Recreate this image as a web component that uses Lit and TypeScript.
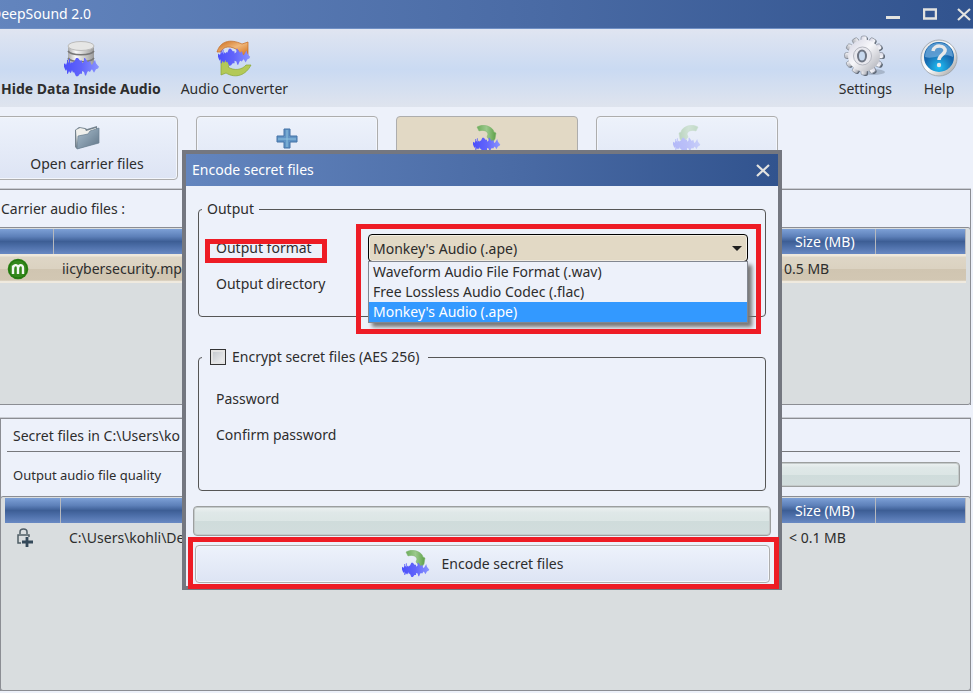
import { LitElement, html, css, svg } from "lit";
import { customElement } from "lit/decorators.js";

const wave = svg`<path d="M0 11V8L1 7L2 9L3 6V3H4V7L5 5V2H6V8L7 5L8 7L9 5L10 6L12 1H14L16 4H18V7L20 5V1H21L24 6L26 4L27 8L28 9L30 5L31 3L32 7L34 10L35 11L34 13L32 14L30 18L28 14L27 15L26 17L24 16L23 18L22 21H21L20 17L18 16V19H16L14 22H12L10 17L9 18L8 15L7 18H6L5 16L4 19H3V14L2 16L1 14Z"/>`;

const waveGradient = (id: string) => svg`<linearGradient id=${id}><stop stop-color="#4b50fb"/><stop offset=".5" stop-color="#6265fb"/><stop offset="1" stop-color="#8994ff"/></linearGradient>`;

const databaseIcon = html`<svg width="38" height="38" viewBox="0 0 38 38" aria-hidden="true">
  <defs>${waveGradient("w")}<linearGradient id="m"><stop stop-color="#aaa"/><stop offset=".3" stop-color="#fafafa"/><stop offset="1" stop-color="#9a9a9a"/></linearGradient></defs>
  <path d="M6 7V25C8 31 30 31 32 25V7Z" fill="url(#m)"/>
  <ellipse cx="19" cy="7" rx="13" ry="4.500" fill="#e6e6e5" stroke="#bbb"/>
  <path d="M6 12C9 17 29 17 32 12M6 19C9 24 29 24 32 19" fill="none" stroke="#777" stroke-width="1.500"/>
  <g transform="translate(2 18) scale(1 .88)" fill="url(#w)">${wave}</g></svg>`;

const converterIcon = html`<svg width="38" height="38" viewBox="0 0 38 38" aria-hidden="true">
  <defs>${waveGradient("w")}<linearGradient id="o" y2="1"><stop stop-color="#c96818"/><stop offset=".5" stop-color="#f0b77a"/><stop offset="1" stop-color="#d06c17"/></linearGradient></defs>
  <path d="M2 13C5 3 14-1 27 5L33 3V17H20L24 12C16 6 8 7 6 13Z" fill="url(#o)" stroke="#c46a20" stroke-width=".7"/>
  <path d="M36 26C31 36 21 40 11 34L6 36V21L17 23L13 28C19 32 27 31 31 26Z" fill="#b3c957" stroke="#8aa634" stroke-width=".7"/>
  <g transform="translate(3 9) scale(.92 .8)" fill="url(#w)">${wave}</g></svg>`;

const gearIcon = html`<svg width="42" height="42" viewBox="0 0 42 42" aria-hidden="true">
  <defs><linearGradient id="g" x2="1" y2="1"><stop stop-color="#d3d3e2"/><stop offset=".45" stop-color="#f7f7fa"/><stop offset="1" stop-color="#a9abb3"/></linearGradient></defs>
  <ellipse cx="29" cy="37" rx="12" ry="3" fill="#8f9caf" opacity=".6"/>
  <g fill="#5c6674" transform="translate(1 1)">${[0, 30, 60, 90, 120, 150].map(a => svg`<rect x="18" y="1" width="5" height="39" rx="2" transform=${`rotate(${a} 20.5 20.5)`}/>`)}</g>
  <g fill="url(#g)" stroke="#7b828d" stroke-width=".6">${[0, 30, 60, 90, 120, 150].map(a => svg`<rect x="17" y="1" width="6" height="39" rx="2" transform=${`rotate(${a} 20 20.5)`}/>`)}</g>
  <circle cx="20" cy="20.500" r="16" fill="url(#g)"/>
  <circle cx="18.500" cy="21" r="9" fill="#e8e8ee" stroke="#b5b7c0"/>
  <ellipse cx="18" cy="21" rx="4" ry="5.500" fill="#c8d9ee" stroke="#6e7583" stroke-width="2"/></svg>`;

const helpIcon = html`<svg width="38" height="38" viewBox="0 0 38 38" aria-hidden="true">
  <defs><linearGradient id="r" y2="1"><stop stop-color="#ddd"/><stop offset=".5" stop-color="#fff"/><stop offset="1" stop-color="#999"/></linearGradient>
  <radialGradient id="b" cy=".85"><stop stop-color="#1fc0f5"/><stop offset="1" stop-color="#1767ad"/></radialGradient></defs>
  <circle cx="19" cy="19" r="18" fill="url(#r)" stroke="#9a9fa6" stroke-width=".8"/>
  <circle cx="19" cy="18" r="15" fill="url(#b)"/>
  <path d="M5 18C5-1 33-1 33 18C24 13 14 21 5 18Z" fill="#7eb5e3" opacity=".65"/>
  <path d="M13 12C14 5 26 6 25 12C24 16 19 16 19 21" fill="none" stroke="#e9e9e9" stroke-width="3.500"/>
  <circle cx="19" cy="26" r="2.200" fill="#e9e9e9"/></svg>`;

const folderIcon = html`<svg width="26" height="26" viewBox="0 0 26 26" aria-hidden="true">
  <defs><linearGradient id="f" y2="1"><stop stop-color="#a9bccb"/><stop offset=".5" stop-color="#869bac"/><stop offset="1" stop-color="#607587"/></linearGradient></defs>
  <path d="M1 5L5 2L11 3L13 4L23 1L24 18L3 24L1 22Z" fill="#75838e"/>
  <path d="M2 5L6 3L11 4L12 6L22 3V8L5 11L3 22Z" fill="#f0f0ec"/>
  <path d="M4 11L14 9L16 6L25 3V18L3 24Z" fill="url(#f)" stroke="#6d8294" stroke-width=".7"/></svg>`;

const plusIcon = html`<svg width="22" height="26" viewBox="0 -3 22 26" aria-hidden="true">
  <path d="M8 1H14V8H21V14H14V20H8V14H1V8H8Z" fill="#6194c5" stroke="#4472a6"/>
  <path d="M11 2V19M2 11H20" stroke="#8fc3df" stroke-width="1"/></svg>`;

const encodeIcon = (flip = false) => html`<svg width="28" height="28" viewBox="0 0 28 28" aria-hidden="true">
  <defs>${waveGradient("w")}<linearGradient id="n"><stop stop-color="#6dad5b"/><stop offset=".5" stop-color="#9bc98d"/><stop offset="1" stop-color="#5ca046"/></linearGradient></defs>
  <g transform=${flip ? "translate(29 0) scale(-1 1)" : "translate(0 0)"}><path d="M4 2C11-2 20 2 21 7L23 8L22 14L19 18L14 12L15 9C14 5 9 5 6 6Z" fill="url(#n)" stroke="#7fb570" stroke-width=".5"/></g>
  <g transform="translate(0 12) scale(.78 .68)" fill="url(#w)">${wave}</g></svg>`;

const monoIcon = html`<svg width="22" height="22" viewBox="0 0 22 22" aria-hidden="true">
  <circle cx="11" cy="11" r="10.300" fill="#2f8317"/><circle cx="11" cy="11" r="9" fill="#34881b" stroke="#176b08" stroke-width=".6"/>
  <path d="M6 16V7.500M6 11C6 6 11 6 11 10V16M11 11C11 6 16 6 16 10V16" fill="none" stroke="#f4f8f2" stroke-width="2.400"/></svg>`;

const lockIcon = html`<svg width="18" height="20" viewBox="0 0 18 20" aria-hidden="true" fill="none" stroke="#4f5d66" stroke-width="1.500">
  <path d="M4 6V4C4 0 11 0 11 4V6M5 15H2V7H13V9"/><path d="M11 9V19M6 14H17" stroke="#34495a" stroke-width="2.800"/></svg>`;

const closeIcon = html`<svg width="14" height="13" viewBox="0 0 14 13" aria-hidden="true"><path d="M1 1L13 12M13 1L1 12" stroke="#e3e3e0" stroke-width="2.200" fill="none"/></svg>`;
const minimizeIcon = html`<svg width="14" height="13" viewBox="0 0 14 13" aria-hidden="true"><path d="M0 9.500H14" stroke="#e3e3e0" stroke-width="3"/></svg>`;
const maximizeIcon = html`<svg width="14" height="13" viewBox="0 0 14 13" aria-hidden="true"><path d="M1 1.500H13V10.500H1Z" stroke="#e3e3e0" stroke-width="2.500" fill="none"/></svg>`;

const base = css`
  * { box-sizing: border-box; }
  button { font: inherit; color: inherit; background: none; border: 0; padding: 0; }
  svg { display: block; flex: none; }
  .titlebar { display: flex; align-items: center; color: #fff; background: linear-gradient(90deg, #6385be, #4a6ba5 55%, #31538e); }
  .titlebar h1, .titlebar h2 { margin: 0; font-size: 14px; font-weight: 400; flex: 1; }
  .face { border: 1px solid #adadad; border-radius: 4px; background: linear-gradient(#edf2fb, #dde4f4); box-shadow: inset 0 0 0 1px #f3f6fc; }
  progress { appearance: none; display: block; border: 1px solid #9c9f9f; border-radius: 4px; background: linear-gradient(#edf2f2, #dfe8e8 20%, #dce6e5 50%, #cfdcdb 51%, #d2dddd); box-shadow: inset 0 0 0 1px #c4caca; }
  progress::-webkit-progress-bar { background: none; }
  progress::-webkit-progress-value { background: #86b5a8; }
`;

@customElement("encode-dialog")
class EncodeDialog extends LitElement {
  static styles = [base, css`
    :host { display: block; width: 600px; max-width: 100%; border: 4px solid #747780; background: #edf1fa; }
    .titlebar { height: 32px; padding: 0 8px 0 6px; }
    .body { padding: 13px 7px 3px; }
    fieldset { margin: 0 5px; padding: 0 3px; border: 1px solid #565656; border-radius: 4px; }
    fieldset + fieldset { margin-top: 30px; }
    legend { padding: 0 5px; line-height: 20px; }
    .check { padding: 0 8px; }
    .check label { display: flex; align-items: center; gap: 6px; }
    .check input { appearance: none; width: 16px; height: 16px; margin: 0; border: 1px solid #333; background: linear-gradient(135deg, #bfc4ca, #f4f4f4); box-shadow: inset 0 0 0 2px #e4e4e4; }
    .rows { display: grid; gap: 8px; padding: 15px 14px 18px; }
    .rows.secret { padding-top: 18px; padding-bottom: 41px; }
    .row { display: grid; grid-template-columns: 152px 1fr; align-items: center; height: 28px; }
    .label, .combo, .action { position: relative; }
    .label { justify-self: start; }
    .mark { position: absolute; border: 5px solid #ee1c25; pointer-events: none; z-index: 2; }
    .label .mark { inset: 1px -15px -5px -11px; }
    .combo .mark { inset: -10px -13px -72px -12px; }
    .action .mark { inset: -8px -9px -6px -7px; }
    select { appearance: none; display: block; width: 100%; height: 28px; padding: 1px 4px 0; font: inherit; color: #2b2b2b; border: 1px solid #000; border-radius: 4px; background: #e2d9c5; box-shadow: inset 0 0 0 1px #f3eee3; }
    .arrow { position: absolute; right: 6px; top: 12px; border: 5px solid transparent; border-top-color: #1f1f1f; border-bottom: 0; pointer-events: none; }
    .list { position: absolute; z-index: 1; top: 27px; left: 0; right: 0; margin: 0; padding: 0; list-style: none; border: 1px solid #828790; background: #edf1fa; box-shadow: 4px 4px 4px #777; }
    .list li { line-height: 20px; padding: 0 4px; }
    .list .on { background: #3399ff; color: #fff; }
    .bar { width: 100%; height: 30px; margin-top: 15px; }
    .action { margin: 9px 1px 0 2px; }
    .action .face { display: flex; align-items: center; justify-content: center; gap: 12px; width: 100%; height: 38px; }
  `];
  render() {
    return html`
      <header class="titlebar"><h2>Encode secret files</h2><button aria-label="Close">${closeIcon}</button></header>
      <div class="body">
        <fieldset>
          <legend>Output</legend>
          <div class="rows">
            <div class="row">
              <label class="label" for="format">Output format<span class="mark"></span></label>
              <div class="combo">
                <select id="format">
                  <option>Waveform Audio File Format (.wav)</option>
                  <option>Free Lossless Audio Codec (.flac)</option>
                  <option selected>Monkey's Audio (.ape)</option>
                </select>
                <span class="arrow"></span>
                <ul class="list" role="listbox" aria-label="Output format">
                  <li role="option">Waveform Audio File Format (.wav)</li>
                  <li role="option">Free Lossless Audio Codec (.flac)</li>
                  <li role="option" class="on" aria-selected="true">Monkey's Audio (.ape)</li>
                </ul>
                <span class="mark"></span>
              </div>
            </div>
            <div class="row"><span class="label">Output directory</span></div>
          </div>
        </fieldset>
        <fieldset>
          <legend class="check"><label><input type="checkbox">Encrypt secret files (AES 256)</label></legend>
          <div class="rows secret">
            <div class="row"><span class="label">Password</span></div>
            <div class="row"><span class="label">Confirm password</span></div>
          </div>
        </fieldset>
        <progress class="bar" value="0" max="100" aria-label="Encoding progress"></progress>
        <div class="action"><button class="face">${encodeIcon()}Encode secret files</button><span class="mark"></span></div>
      </div>`;
  }
}

@customElement("app-root")
class AppRoot extends LitElement {
  static styles = [base, css`
    :host { display: block; overflow: hidden; font: 14px/20px "Noto Sans", "Open Sans", sans-serif; color: #2d2d2d; }
    .window { position: relative; display: flex; flex-direction: column; min-height: 100vh; margin-left: -9px; background: #edf1fa; }
    .window > .titlebar { height: 29px; border-bottom: 1px solid #6f8fc4; }
    .window > .titlebar h1 { line-height: 28px; }
    .controls { display: flex; gap: 20px; padding-right: 2px; }
    .controls button:first-child { margin-right: 3px; }
    .toolbar { display: flex; gap: 20px; height: 78px; padding: 8px 15px 0 10px; background: linear-gradient(#e0e5f1, #cadaf2 52%, #dfe4ee); }
    .toolbar button { display: flex; flex-direction: column; align-items: center; height: 62px; justify-content: flex-end; gap: 2px; }
    .toolbar .current { font-weight: 700; }
    .toolbar .push { margin-left: auto; }
    .toolbar .far { margin-left: 8px; }
    .actions { display: flex; gap: 18px; padding: 9px 5px; }
    .actions button { display: flex; flex-direction: column; align-items: center; width: 182px; height: 64px; padding-top: 8px; gap: 3px; }
    .actions .active { background: #e2d9c5; box-shadow: none; }
    .actions .disabled svg { opacity: .32; }
    .group { margin-right: 2px; border: 1px solid #8b8d93; box-shadow: 0 -1px #c9ccd3; }
    .carrier { margin-left: 4px; border-bottom: 0; }
    .secret { flex: 1; display: flex; flex-direction: column; margin: 13px 2px 2px 9px; }
    .caption { margin: 0; font-size: 14px; font-weight: 400; }
    .carrier .caption { line-height: 37px; padding-left: 5px; }
    .small { font-size: 13px; }
    .secret .caption { margin: 0 10px 0 6px; padding: 2px 6px 0; line-height: 30px; border-bottom: 1px solid #77787c; }
    .quality { display: flex; align-items: center; gap: 40px; height: 44px; padding: 1px 10px 0 12px; }
    .quality progress { flex: 1; height: 25px; }
    .panel { margin: 0 -1px; padding: 1px 4px 0; border: 1px solid #8b8d93; border-radius: 3px; background: #d9dddf; }
    .carrier .panel { height: 178px; padding-left: 2px; }
    .secret .panel { flex: 1; margin-bottom: -1px; }
    table { width: 100%; border-collapse: separate; border-spacing: 0; table-layout: fixed; }
    th, td { padding: 0 8px; text-align: left; font-weight: 400; white-space: nowrap; }
    th { height: 25px; color: #fff; border-right: 1px solid #b7b9be; background: linear-gradient(#7da0d6, #5d80b9 30%, #3d5e95 50%, #4d6fa9 70%, #6989c3); }
    .icon { width: 56px; }
    .size { width: 110px; padding-left: 29px; }
    .rest { width: 90px; }
    td { height: 29px; }
    td.icon { padding-left: 9px; }
    td.amount { padding-left: 18px; }
    .secret td.icon { padding-left: 11px; }
    .secret td.amount { padding-left: 23px; }
    .picked td { background: linear-gradient(#eee8dc 2px, #ded6c6 3px, #dbd2c1 50%, #d0c5b1 51%, #d2c7b3 90%, #f0eadf 95%); }
    .overlay { position: absolute; inset: 150px 0 auto 0; display: flex; justify-content: center; }
  `];
  private table(icon: unknown, name: string, size: string, picked: boolean) {
    return html`<div class="panel"><table>
      <thead><tr><th class="icon"></th><th></th><th class="size">Size (MB)</th><th class="rest"></th></tr></thead>
      <tbody><tr class=${picked ? "picked" : ""}><td class="icon">${icon}</td><td>${name}</td><td class="amount">${size}</td><td></td></tr></tbody>
    </table></div>`;
  }
  render() {
    return html`<div class="window">
      <header class="titlebar"><h1>DeepSound 2.0</h1>
        <div class="controls"><button aria-label="Minimize">${minimizeIcon}</button><button aria-label="Maximize">${maximizeIcon}</button><button aria-label="Close">${closeIcon}</button></div>
      </header>
      <nav class="toolbar">
        <button class="current">${databaseIcon}Hide Data Inside Audio</button>
        <button>${converterIcon}Audio Converter</button>
        <button class="push">${gearIcon}Settings</button>
        <button class="far">${helpIcon}Help</button>
      </nav>
      <div class="actions">
        <button class="face">${folderIcon}Open carrier files</button>
        <button class="face" aria-label="Add">${plusIcon}</button>
        <button class="face active" aria-label="Encode">${encodeIcon()}</button>
        <button class="face disabled" aria-label="Extract" disabled>${encodeIcon(true)}</button>
      </div>
      <section class="group carrier">
        <h2 class="caption">Carrier audio files :</h2>
        ${this.table(monoIcon, "iicybersecurity.mp", "0.5 MB", true)}
      </section>
      <section class="group secret">
        <h2 class="caption">Secret files in C:\\Users\\ko</h2>
        <div class="quality"><span class="small">Output audio file quality</span><progress value="0" max="100" aria-label="Output audio file quality"></progress></div>
        ${this.table(lockIcon, "C:\\Users\\kohli\\De", "< 0.1 MB", false)}
      </section>
      <div class="overlay"><encode-dialog role="dialog" aria-label="Encode secret files"></encode-dialog></div>
    </div>`;
  }
}
